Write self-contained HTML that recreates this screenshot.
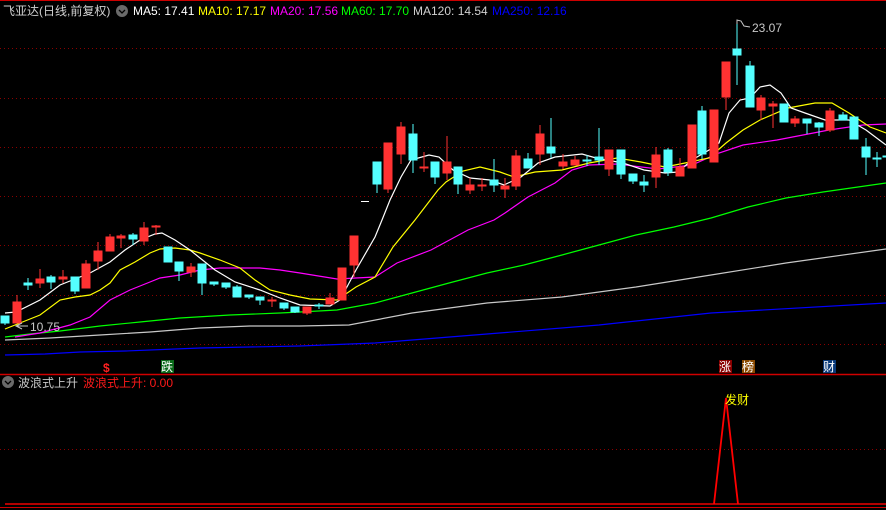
<!DOCTYPE html>
<html><head><meta charset="utf-8"><style>
html,body{margin:0;padding:0;background:#000;width:886px;height:510px;overflow:hidden}
svg{display:block}
text{font-family:"Liberation Sans","Noto Sans CJK SC",sans-serif;font-size:12px}
</style></head><body>
<svg width="886" height="510" viewBox="0 0 886 510" xmlns="http://www.w3.org/2000/svg">
<rect width="886" height="510" fill="#000"/>
<line x1="0" y1="0.5" x2="886" y2="0.5" stroke="#c00" stroke-width="1"/>
<g stroke="#8a0000" stroke-width="1" stroke-dasharray="1,3">
<line x1="0" y1="48.5" x2="886" y2="48.5"/><line x1="0" y1="98.5" x2="886" y2="98.5"/>
<line x1="0" y1="147.5" x2="886" y2="147.5"/><line x1="0" y1="196.5" x2="886" y2="196.5"/>
<line x1="0" y1="245.5" x2="886" y2="245.5"/><line x1="0" y1="295.5" x2="886" y2="295.5"/>
<line x1="0" y1="344.5" x2="886" y2="344.5"/><line x1="0" y1="449.5" x2="886" y2="449.5"/>
</g>
<line x1="0" y1="374.5" x2="886" y2="374.5" stroke="#d00000" stroke-width="1.5"/>
<line x1="5" y1="504" x2="886" y2="504" stroke="#e00" stroke-width="1.5"/>
<line x1="0" y1="507.5" x2="886" y2="507.5" stroke="#c00" stroke-width="1"/>

<!-- MAs -->
<g fill="none" stroke-width="1.2">
<polyline stroke="#0000ff" points="5,355 45,354 80,352 125,351 200,348 300,346 375,343 487,334 599,325 711,313 886,303"/>
<polyline stroke="#c8c8c8" points="5,340 50,338 100,335 150,332 200,328 250,326 300,326 349,325 412,313 487,303 562,297 636,287 711,275 786,263 886,249"/>
<polyline stroke="#00ff00" points="5,337 30,334 60,331 100,326 140,322 180,318 230,315 280,313 300,312 337,310 375,303 412,293 449,283 487,273 524,265 562,255 599,245 636,235 674,227 711,218 748,207 786,198 823,192 886,183"/>
<polyline stroke="#ff00ff" points="15,337 40,333 70,325 90,317 110,300 130,290 150,282 160,278 180,275 200,270 220,268 260,268 280,270 300,273 337,279 375,277 397,263 431,250 468,230 494,220 505,213 528,197 555,183 572,170 589,165 617,164 658,169 692,165 719,153 743,145 777,140 829,130 863,125 886,124"/>
<polyline stroke="#ffff00" points="5,329 20,323 40,315 60,300 75,297 90,295 100,290 110,283 120,270 135,262 150,253 160,249 175,248 190,250 200,253 220,260 240,268 255,280 270,290 290,295 310,299 337,300 356,287 375,277 393,247 415,220 438,190 446,182 463,171 480,167 500,172 514,177 535,172 562,170 589,163 617,158 641,162 665,167 685,163 709,158 726,143 743,130 760,120 788,108 815,103 832,103 849,113 870,127 886,133"/>
<polyline stroke="#ffffff" points="5,313 16,312 40,300 60,285 75,279 90,273 110,262 125,250 140,240 155,234 162,233 175,240 190,250 205,262 215,270 235,282 260,290 280,298 300,305 330,306 340,300 356,270 375,237 382,220 390,200 401,177 411,160 429,155 439,157 453,170 470,178 490,180 504,185 521,177 538,163 555,157 582,154 596,158 623,163 644,170 665,173 678,172 692,160 709,150 719,143 729,113 740,100 750,98 760,87 770,85 781,93 791,108 805,113 825,120 849,120 866,130 886,145"/>
</g>

<!-- candles -->
<g id="c">
<!-- format: wick line + body rect -->
<g fill="#54ffff" stroke="#54ffff">
<line x1="5" y1="316" x2="5" y2="325"/><rect x="1" y="316" width="8" height="7"/>
<line x1="28" y1="278" x2="28" y2="290"/><rect x="24" y="283" width="8" height="2"/>
<line x1="51" y1="275" x2="51" y2="289"/><rect x="47" y="277" width="8" height="5"/>
<line x1="75" y1="277" x2="75" y2="294"/><rect x="71" y="277" width="8" height="14"/>
<line x1="133" y1="233" x2="133" y2="245"/><rect x="129" y="235" width="8" height="4"/>
<line x1="168" y1="247" x2="168" y2="262"/><rect x="164" y="247" width="8" height="15"/>
<line x1="179" y1="262" x2="179" y2="281"/><rect x="175" y="262" width="8" height="9"/>
<line x1="202" y1="264" x2="202" y2="295"/><rect x="198" y="264" width="8" height="19"/>
<line x1="214" y1="282" x2="214" y2="286"/><rect x="210" y="282" width="8" height="2"/>
<line x1="226" y1="283" x2="226" y2="289"/><rect x="222" y="283" width="8" height="4"/>
<line x1="237" y1="285" x2="237" y2="297"/><rect x="233" y="287" width="8" height="10"/>
<line x1="249" y1="295" x2="249" y2="299"/><rect x="245" y="295" width="8" height="2"/>
<line x1="260" y1="297" x2="260" y2="305"/><rect x="256" y="297" width="8" height="3"/>
<line x1="284" y1="303" x2="284" y2="310"/><rect x="280" y="303" width="8" height="5"/>
<line x1="295" y1="307" x2="295" y2="313"/><rect x="291" y="307" width="8" height="5"/>
<line x1="319" y1="303" x2="319" y2="309"/><rect x="315" y="305" width="8" height="1"/>
<line x1="377" y1="162" x2="377" y2="193"/><rect x="373" y="162" width="8" height="22"/>
<line x1="413" y1="124" x2="413" y2="173"/><rect x="409" y="134" width="8" height="26"/>
<line x1="435" y1="162" x2="435" y2="184"/><rect x="431" y="162" width="8" height="15"/>
<line x1="458" y1="167" x2="458" y2="194"/><rect x="454" y="167" width="8" height="17"/>
<line x1="494" y1="159" x2="494" y2="192"/><rect x="490" y="180" width="8" height="5"/>
<line x1="528" y1="153" x2="528" y2="168"/><rect x="524" y="159" width="8" height="9"/>
<line x1="551" y1="118" x2="551" y2="158"/><rect x="547" y="147" width="8" height="6"/>
<line x1="587" y1="155" x2="587" y2="166"/><rect x="583" y="160" width="8" height="1"/>
<line x1="599" y1="128" x2="599" y2="165"/><rect x="595" y="157" width="8" height="3"/>
<line x1="621" y1="150" x2="621" y2="179"/><rect x="617" y="150" width="8" height="24"/>
<line x1="633" y1="174" x2="633" y2="184"/><rect x="629" y="174" width="8" height="7"/>
<line x1="644" y1="175" x2="644" y2="192"/><rect x="640" y="182" width="8" height="3"/>
<line x1="668" y1="148" x2="668" y2="176"/><rect x="664" y="150" width="8" height="22"/>
<line x1="702" y1="106" x2="702" y2="159"/><rect x="698" y="111" width="8" height="43"/>
<line x1="737" y1="23" x2="737" y2="85"/><rect x="733" y="49" width="8" height="6"/>
<line x1="750" y1="61" x2="750" y2="107"/><rect x="746" y="66" width="8" height="41"/>
<line x1="784" y1="104" x2="784" y2="122"/><rect x="780" y="104" width="8" height="18"/>
<line x1="807" y1="119" x2="807" y2="134"/><rect x="803" y="119" width="8" height="4"/>
<line x1="819" y1="122" x2="819" y2="136"/><rect x="815" y="123" width="8" height="4"/>
<line x1="843" y1="112" x2="843" y2="120"/><rect x="839" y="115" width="8" height="5"/>
<line x1="854" y1="117" x2="854" y2="139"/><rect x="850" y="117" width="8" height="22"/>
<line x1="866" y1="138" x2="866" y2="175"/><rect x="862" y="147" width="8" height="10"/>
<line x1="877" y1="152" x2="877" y2="167"/><rect x="873" y="158" width="8" height="1"/>
<rect x="883" y="156" width="4" height="1"/>
</g>
<g fill="#ff3232" stroke="#ff3232">
<line x1="17" y1="295" x2="17" y2="323"/><rect x="13" y="302" width="8" height="21"/>
<line x1="40" y1="269" x2="40" y2="288"/><rect x="36" y="279" width="8" height="4"/>
<line x1="63" y1="270" x2="63" y2="283"/><rect x="59" y="277" width="8" height="2"/>
<line x1="86" y1="260" x2="86" y2="288"/><rect x="82" y="264" width="8" height="24"/>
<line x1="98" y1="242" x2="98" y2="270"/><rect x="94" y="251" width="8" height="10"/>
<line x1="110" y1="234" x2="110" y2="251"/><rect x="106" y="237" width="8" height="14"/>
<line x1="121" y1="234" x2="121" y2="248"/><rect x="117" y="236" width="8" height="2"/>
<line x1="144" y1="222" x2="144" y2="245"/><rect x="140" y="228" width="8" height="13"/>
<line x1="156" y1="225" x2="156" y2="235"/><rect x="152" y="226" width="8" height="1"/>
<line x1="191" y1="263" x2="191" y2="277"/><rect x="187" y="267" width="8" height="5"/>
<line x1="272" y1="297" x2="272" y2="307"/><rect x="268" y="300" width="8" height="1"/>
<line x1="307" y1="307" x2="307" y2="315"/><rect x="303" y="307" width="8" height="6"/>
<line x1="330" y1="293" x2="330" y2="304"/><rect x="326" y="298" width="8" height="6"/>
<line x1="342" y1="268" x2="342" y2="300"/><rect x="338" y="268" width="8" height="32"/>
<line x1="354" y1="236" x2="354" y2="277"/><rect x="350" y="236" width="8" height="29"/>
<line x1="388" y1="143" x2="388" y2="193"/><rect x="384" y="143" width="8" height="46"/>
<line x1="401" y1="122" x2="401" y2="164"/><rect x="397" y="127" width="8" height="27"/>
<line x1="424" y1="152" x2="424" y2="172"/><rect x="420" y="167" width="8" height="1"/>
<line x1="447" y1="136" x2="447" y2="180"/><rect x="443" y="162" width="8" height="11"/>
<line x1="470" y1="178" x2="470" y2="194"/><rect x="466" y="185" width="8" height="5"/>
<line x1="482" y1="178" x2="482" y2="191"/><rect x="478" y="185" width="8" height="1"/>
<line x1="505" y1="178" x2="505" y2="198"/><rect x="501" y="186" width="8" height="3"/>
<line x1="516" y1="150" x2="516" y2="190"/><rect x="512" y="156" width="8" height="30"/>
<line x1="540" y1="125" x2="540" y2="165"/><rect x="536" y="134" width="8" height="20"/>
<line x1="563" y1="154" x2="563" y2="169"/><rect x="559" y="162" width="8" height="4"/>
<line x1="575" y1="156" x2="575" y2="165"/><rect x="571" y="160" width="8" height="5"/>
<line x1="609" y1="150" x2="609" y2="176"/><rect x="605" y="150" width="8" height="19"/>
<line x1="656" y1="147" x2="656" y2="188"/><rect x="652" y="155" width="8" height="22"/>
<line x1="680" y1="158" x2="680" y2="176"/><rect x="676" y="167" width="8" height="9"/>
<line x1="692" y1="125" x2="692" y2="168"/><rect x="688" y="125" width="8" height="43"/>
<line x1="714" y1="110" x2="714" y2="162"/><rect x="710" y="110" width="8" height="52"/>
<line x1="726" y1="62" x2="726" y2="110"/><rect x="722" y="62" width="8" height="35"/>
<line x1="761" y1="95" x2="761" y2="120"/><rect x="757" y="98" width="8" height="12"/>
<line x1="773" y1="101" x2="773" y2="128"/><rect x="769" y="104" width="8" height="2"/>
<line x1="795" y1="116" x2="795" y2="127"/><rect x="791" y="119" width="8" height="4"/>
<line x1="830" y1="108" x2="830" y2="132"/><rect x="826" y="111" width="8" height="19"/>
</g>
<line x1="361" y1="201.5" x2="369" y2="201.5" stroke="#fff" stroke-width="1"/>
</g>

<!-- price labels -->
<g fill="#c8c8c8" stroke="#c8c8c8" stroke-width="1">
<polyline fill="none" points="737,24 737,20 741,21 744,26 750,27"/>
<polyline fill="none" points="22,323 16,326 22,329"/><line x1="16" y1="326" x2="28" y2="326"/>
</g>
<text x="752" y="32" fill="#c8c8c8">23.07</text>
<text x="30" y="331" fill="#c8c8c8">10.75</text>

<!-- signal markers -->
<text x="103" y="372" fill="#ff2020" font-weight="bold">$</text>
<rect x="161" y="360" width="13" height="13" fill="#0a6a1a"/><text x="161" y="371" fill="#fff">跌</text>
<rect x="719" y="360" width="13" height="13" fill="#8a0000"/><text x="719" y="371" fill="#fff">涨</text>
<rect x="742" y="360" width="13" height="13" fill="#8a4a00"/><text x="742" y="371" fill="#fff">榜</text>
<rect x="823" y="360" width="13" height="13" fill="#0a3a7a"/><text x="823" y="371" fill="#fff">财</text>

<!-- header -->
<text x="3" y="15" fill="#d0d0d0">飞亚达(日线,前复权)</text>
<circle cx="122" cy="11" r="6" fill="#6a6a6a"/><polyline points="119,10 122,13 125,10" fill="none" stroke="#000" stroke-width="1.3"/>
<text x="133" y="15" fill="#ffffff">MA5: 17.41</text>
<text x="198" y="15" fill="#ffff00">MA10: 17.17</text>
<text x="270" y="15" fill="#ff00ff">MA20: 17.56</text>
<text x="341" y="15" fill="#00ff00">MA60: 17.70</text>
<text x="413" y="15" fill="#d0d0d0">MA120: 14.54</text>
<text x="492" y="15" fill="#0000ff">MA250: 12.16</text>

<!-- bottom panel -->
<circle cx="8" cy="382" r="6" fill="#6a6a6a"/><polyline points="5,381 8,384 11,381" fill="none" stroke="#000" stroke-width="1.3"/>
<text x="18" y="387" fill="#c8c8c8">波浪式上升</text>
<text x="83" y="387" fill="#ff1a1a">波浪式上升: 0.00</text>
<polyline points="714,504 726,398 738,504" fill="none" stroke="#ff0000" stroke-width="1.8"/>
<text x="725" y="404" fill="#ffff00">发财</text>
</svg>
</body></html>
